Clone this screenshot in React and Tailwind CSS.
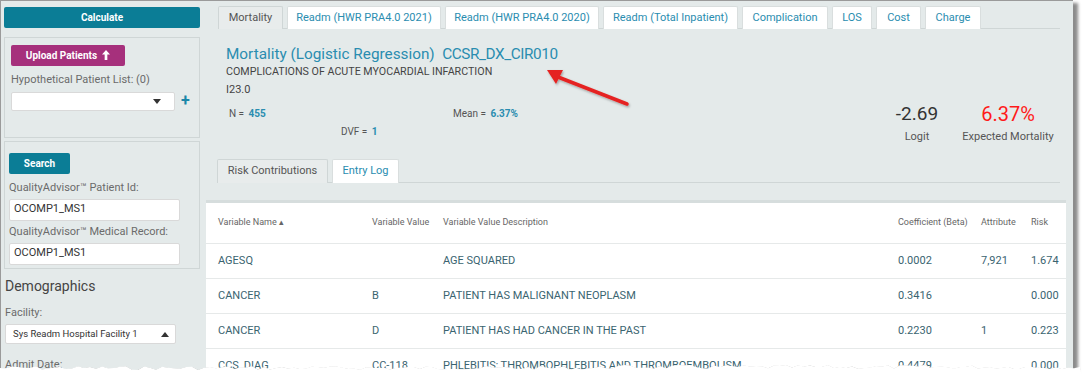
import React from "react";

const F = { fontFamily: "Roboto, 'Liberation Sans', sans-serif" };

function Caret({ up = false }) {
  return (
    <svg width="8" height="5" viewBox="0 0 8 5" className="block">
      {up ? <path d="M0 5 L4 0 L8 5 Z" fill="#333" /> : <path d="M0 0 L8 0 L4 5 Z" fill="#333" />}
    </svg>
  );
}

function Sidebar() {
  return (
    <div className="w-[204px] shrink-0 flex flex-col pl-[3px] pt-[6px]">
      <button className="w-[196px] h-[21px] rounded-[2px] bg-[#0b7d96] text-white text-[10px] font-bold">Calculate</button>
      <div className="mt-[9px] w-[196px] h-[101px] border border-[#cfd6d6] px-[6px] pt-[7px]">
        <button className="w-[114px] h-[21px] rounded-[2px] bg-[#a6307c] text-white text-[10px] font-bold flex items-center justify-center gap-[5px]">
          Upload Patients
          <svg width="8" height="10" viewBox="0 0 9 11"><path d="M4.5 0 L9 5 L6 5 L6 11 L3 11 L3 5 L0 5 Z" fill="#fff" /></svg>
        </button>
        <div className="mt-[7px] text-[11px] text-[#6b6b6b] leading-[14px]">Hypothetical Patient List: (0)</div>
        <div className="mt-[5px] flex items-center">
          <div className="w-[164px] h-[19px] bg-white border border-[#d9d9d9] rounded-[2px] flex items-center justify-end pr-[13px]">
            <Caret />
          </div>
          <span className="ml-[6px] text-[#1a86a8] text-[16px] font-bold leading-none">+</span>
        </div>
      </div>
      <div className="mt-[3px] w-[196px] h-[129px] border border-[#cfd6d6] px-[4px] pt-[8px]">
        <button className="w-[61px] h-[21px] rounded-[2px] bg-[#0b7d96] text-white text-[10px] font-bold">Search</button>
        <div className="mt-[7px] text-[11px] text-[#6b6b6b] leading-[14px]">QualityAdvisor™ Patient Id:</div>
        <div className="mt-[4px] w-[171px] h-[22px] bg-white border border-[#d9d9d9] rounded-[2px] flex items-center px-[4px] text-[11px] text-[#333]">OCOMP1_MS1</div>
        <div className="mt-[4px] text-[11px] text-[#6b6b6b] leading-[14px]">QualityAdvisor™ Medical Record:</div>
        <div className="mt-[4px] w-[171px] h-[22px] bg-white border border-[#d9d9d9] rounded-[2px] flex items-center px-[4px] text-[11px] text-[#333]">OCOMP1_MS1</div>
      </div>
      <div className="mt-[7px] pl-[1px] text-[14px] text-[#444] leading-[20px]">Demographics</div>
      <div className="mt-[10px] pl-[1px] text-[11px] text-[#6b6b6b] leading-[14px]">Facility:</div>
      <div className="mt-[4px] ml-[1px] w-[171px] h-[20px] bg-white border border-[#d9d9d9] rounded-[2px] flex items-center justify-between pl-[7px] pr-[6px] text-[9.5px] text-[#333]">
        <span>Sys Readm Hospital Facility 1</span>
        <Caret up />
      </div>
      <div className="mt-[14px] pl-[1px] text-[11px] text-[#6b6b6b] leading-[14px]">Admit Date:</div>
    </div>
  );
}

const tabs = [
  ["Mortality", true],
  ["Readm (HWR PRA4.0 2021)", false],
  ["Readm (HWR PRA4.0 2020)", false],
  ["Readm (Total Inpatient)", false],
  ["Complication", false],
  ["LOS", false],
  ["Cost", false],
  ["Charge", false],
];

const tabW = [65, 154, 154, 135, 86, 40, 45, 56];

const rows = [
  ["AGESQ", "", "AGE SQUARED", "0.0002", "7,921", "1.674"],
  ["CANCER", "B", "PATIENT HAS MALIGNANT NEOPLASM", "0.3416", "", "0.000"],
  ["CANCER", "D", "PATIENT HAS HAD CANCER IN THE PAST", "0.2230", "1", "0.223"],
  ["CCS_DIAG", "CC-118", "PHLEBITIS; THROMBOPHLEBITIS AND THROMBOEMBOLISM", "0.4479", "", "0.000"],
];

const colW = ["w-[154px]", "w-[71px]", "w-[455px]", "w-[83px]", "w-[50px]", "w-[30px]"];

function Main() {
  return (
    <div className="flex-1 flex flex-col pt-[5px]">
      <div className="ml-[13px] mr-[13px] flex gap-[4px] border-b border-[#cfd6d6] h-[23px]">
        {tabs.map(([t, a], i) => (
          <div
            key={t}
            style={{ width: tabW[i] }}
            className={
              "h-[23px] flex items-center justify-center text-[11px] rounded-t-[2px] border border-b-0 " +
              (a ? "bg-[#e8ecec] border-[#cfd6d6] text-[#555]" : "bg-white border-[#d9dede] text-[#2a8db0]")
            }
          >
            {t}
          </div>
        ))}
      </div>
      <div className="ml-[21px] mt-[15px] text-[15.3px] leading-[20px] text-[#2a8db0] whitespace-pre">
        Mortality (Logistic Regression)  <span className="tracking-[-0.4px]">CCSR_DX_CIR010</span>
      </div>
      <div className="ml-[21px] mt-[1px] text-[10.7px] leading-[14px] text-[#444]">COMPLICATIONS OF ACUTE MYOCARDIAL INFARCTION</div>
      <div className="ml-[21px] mt-[4px] text-[11px] leading-[14px] text-[#444]">I23.0</div>
      <div className="flex h-[47px]">
        <div className="w-[680px] relative h-[44px] text-[10px] text-[#555]">
          <div className="absolute left-[24px] top-[9px]">N = <span className="text-[#2a8db0] font-bold ml-[2px]">455</span></div>
          <div className="absolute left-[248px] top-[9px]">Mean = <span className="text-[#2a8db0] font-bold ml-[2px]">6.37%</span></div>
          <div className="absolute left-[136px] top-[27px]">DVF = <span className="text-[#2a8db0] font-bold ml-[2px]">1</span></div>
        </div>
        <div className="flex items-start mt-[5px] ml-[7px]">
          <div className="w-[50px] flex flex-col items-center">
            <div className="text-[19px] leading-[24px] text-[#333]">-2.69</div>
            <div className="mt-[4px] text-[11px] leading-[14px] text-[#555]">Logit</div>
          </div>
          <div className="ml-[16px] w-[100px] flex flex-col items-center">
            <div className="text-[20px] leading-[24px] text-[#ff1a1a]">6.37%</div>
            <div className="mt-[4px] text-[11px] leading-[14px] text-[#555]">Expected Mortality</div>
          </div>
        </div>
      </div>
      <div className="ml-[12px] mr-[13px] mt-[15px] flex gap-[4px] border-b border-[#cfd6d6] h-[24px]">
        <div className="w-[111px] h-[24px] flex items-center justify-center text-[11px] text-[#555] bg-[#e8ecec] border border-b-0 border-[#cfd6d6] rounded-t-[2px]">Risk Contributions</div>
        <div className="w-[67px] h-[24px] flex items-center justify-center text-[11px] text-[#2a8db0] bg-white border border-b-0 border-[#d9dede] rounded-t-[2px]">Entry Log</div>
      </div>
      <div className="ml-[1px] mr-[7px] mt-[17px] border-t-[3px] border-[#d6dddd] bg-white flex-1">
        <div className="flex items-center h-[41px] pl-[12px] text-[9px] text-[#666] border-b border-[#e6e9e9]">
          <div className={colW[0]}>Variable Name ▴</div>
          <div className={colW[1]}>Variable Value</div>
          <div className={colW[2]}>Variable Value Description</div>
          <div className={colW[3]}>Coefficient (Beta)</div>
          <div className={colW[4]}>Attribute</div>
          <div className={colW[5]}>Risk</div>
        </div>
        {rows.map((r, i) => (
          <div key={i} className="flex items-center h-[35px] pl-[12px] text-[11px] text-[#3a6470] border-b border-[#e6e9e9]">
            {r.map((c, j) => (
              <div key={j} className={colW[j] + " whitespace-nowrap"}>{c}</div>
            ))}
          </div>
        ))}
      </div>
    </div>
  );
}

function Torn() {
  const pts = [];
  let seed = 7;
  const rnd = () => {
    seed = (seed * 9301 + 49297) % 233280;
    return seed / 233280;
  };
  for (let x = 0; x <= 1085; x += 6) {
    const y = 6 + rnd() * 4 + (x > 600 ? -1 : 0);
    pts.push([x, y]);
  }
  const d = "M0 " + pts[0][1] + pts.map(([x, y]) => ` L${x} ${y.toFixed(1)}`).join("");
  const fill = d + " L1085 40 L0 40 Z";
  return (
    <svg className="absolute left-0 top-[360px]" width="1085" height="23" viewBox="0 0 1085 23">
      <path d={d} transform="translate(0 1.5)" fill="none" stroke="#777" strokeWidth="2.5" opacity="0.6" />
      <path d={fill} fill="#fff" />
    </svg>
  );
}

function Arrow() {
  return (
    <svg className="absolute left-0 top-0 pointer-events-none" width="1085" height="383">
      <defs>
        <filter id="sh" x="-20%" y="-20%" width="140%" height="140%">
          <feDropShadow dx="1" dy="1.5" stdDeviation="1" floodColor="#000" floodOpacity="0.3" />
        </filter>
      </defs>
      <g filter="url(#sh)">
        <line x1="627" y1="104" x2="558" y2="77" stroke="#e52420" strokeWidth="3.5" strokeLinecap="round" />
        <path d="M547 70 L563 70 L556 84 Z" fill="#e52420" />
      </g>
    </svg>
  );
}

export default function App() {
  return (
    <div style={F} className="relative w-[1085px] h-[383px] bg-white overflow-hidden">
      <div className="w-[1073px] h-[372px] flex bg-[#e4eaea] border-t border-l border-[#9a9a9a] shadow-[5px_3px_3px_rgba(0,0,0,0.45)] overflow-hidden">
        <Sidebar />
        <Main />
      </div>
      <Torn />
      <Arrow />
    </div>
  );
}
